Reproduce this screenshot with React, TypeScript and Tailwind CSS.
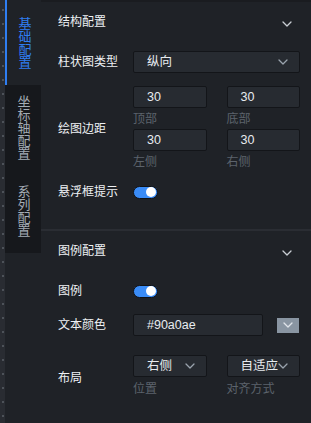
import React from 'react';

const font = { fontFamily: '"Liberation Sans", "Noto Sans CJK SC", sans-serif' };

function Chevron({ className = '' }: { className?: string }) {
  return (
    <svg width="10" height="6" viewBox="0 0 10 6" className={className} fill="none">
      <path d="M1 1l4 4 4-4" stroke="currentColor" strokeWidth="1.3" strokeLinecap="round" strokeLinejoin="round" />
    </svg>
  );
}

function Toggle() {
  return (
    <div className="w-[25px] h-[13px] rounded-full bg-[#3a8cf7] border border-[#101216] flex items-center justify-end pr-[1px]">
      <div className="w-[10px] h-[10px] rounded-full bg-white" />
    </div>
  );
}

function Input({ value }: { value: string }) {
  return (
    <div className="h-[22px] bg-[#272b31] border border-[#131519] rounded-[2px] flex items-center pl-[13px] text-[12.5px] text-[#e8ecf0]">
      {value}
    </div>
  );
}

function Select({ value }: { value: string }) {
  return (
    <div className="h-[22px] bg-[#272b31] border border-[#131519] rounded-[2px] flex items-center justify-between pl-[13px] pr-[11px] text-[12.5px] text-[#e8ecf0]">
      <span>{value}</span>
      <Chevron className="text-[#9aa3ad]" />
    </div>
  );
}

function Sub({ text }: { text: string }) {
  return <div className="text-[12px] text-[#5c636c] leading-none flex items-center">{text}</div>;
}

function Header({ title }: { title: string }) {
  return (
    <div className="h-10 flex items-center justify-between pl-[17px] pr-[19px]">
      <span className="text-[12px] text-[#eef1f4]">{title}</span>
      <Chevron className="text-[#c9ced4] mt-[3px]" />
    </div>
  );
}

function Row({ label, children, className = '' }: { label: string; children: React.ReactNode; className?: string }) {
  return (
    <div className={`flex items-center pl-[17px] pr-[11px] ${className}`}>
      <div className="w-[75px] shrink-0 text-[12px] text-[#eef1f4]">{label}</div>
      <div className="flex-1">{children}</div>
    </div>
  );
}

const tabs = [
  { label: '基础配置', active: true, h: 'h-[85px]' },
  { label: '坐标轴配置', active: false, h: 'h-[84px]' },
  { label: '系列配置', active: false, h: 'h-[84px]' },
];

export default function App() {
  return (
    <div style={font} className="w-[311px] h-[423px] flex bg-[#1f2227] overflow-hidden">
      <div className="w-[5px] shrink-0 bg-[#292c32] flex flex-col items-center gap-[12px] pt-[9px]">
        {Array.from({ length: 30 }).map((_, i) => (
          <div key={i} className="w-[2px] h-[2px] rounded-full bg-[#5a5f67]" />
        ))}
      </div>

      <div className="w-[36px] shrink-0 flex flex-col">
        {tabs.map((tab) => (
          <div
            key={tab.label}
            className={`${tab.h} flex items-center justify-center ${
              tab.active ? 'border-l-2 border-[#2f7ef2] text-[#2f7ef2]' : 'bg-[#16181c] text-[#a3abb4]'
            }`}
          >
            <span className="text-[13px] leading-[13px] [writing-mode:vertical-rl] tracking-[0px]">{tab.label}</span>
          </div>
        ))}
      </div>

      <div className="flex-1 flex flex-col border-t-2 border-[#1a1c20]">
        <Header title="结构配置" />

        <Row label="柱状图类型" className="mt-[9px]">
          <Select value="纵向" />
        </Row>

        <Row label="绘图边距" className="mt-[13px]">
          <div className="grid grid-cols-2 gap-x-5">
            <Input value="30" />
            <Input value="30" />
            <div className="h-[21px] flex items-center"><Sub text="顶部" /></div>
            <div className="h-[21px] flex items-center"><Sub text="底部" /></div>
            <Input value="30" />
            <Input value="30" />
            <div className="h-[21px] flex items-center"><Sub text="左侧" /></div>
            <div className="h-[21px] flex items-center"><Sub text="右侧" /></div>
          </div>
        </Row>

        <Row label="悬浮框提示" className="h-10">
          <Toggle />
        </Row>

        <div className="mt-[17px] h-[2px] bg-[#2a2d33]" />

        <Header title="图例配置" />

        <Row label="图例" className="h-10">
          <Toggle />
        </Row>

        <Row label="文本颜色" className="mt-[3px]">
          <div className="flex items-center">
            <div className="w-[130px]">
              <Input value="#90a0ae" />
            </div>
            <div className="ml-[14px] w-[22px] h-[15px] bg-[#8995a2] flex items-center justify-center">
              <Chevron className="text-[#dfe4ea]" />
            </div>
          </div>
        </Row>

        <Row label="布局" className="mt-[19px]">
          <div className="grid grid-cols-2 gap-x-5">
            <Select value="右侧" />
            <Select value="自适应" />
            <div className="h-[24px] flex items-center"><Sub text="位置" /></div>
            <div className="h-[24px] flex items-center"><Sub text="对齐方式" /></div>
          </div>
        </Row>
      </div>
    </div>
  );
}
